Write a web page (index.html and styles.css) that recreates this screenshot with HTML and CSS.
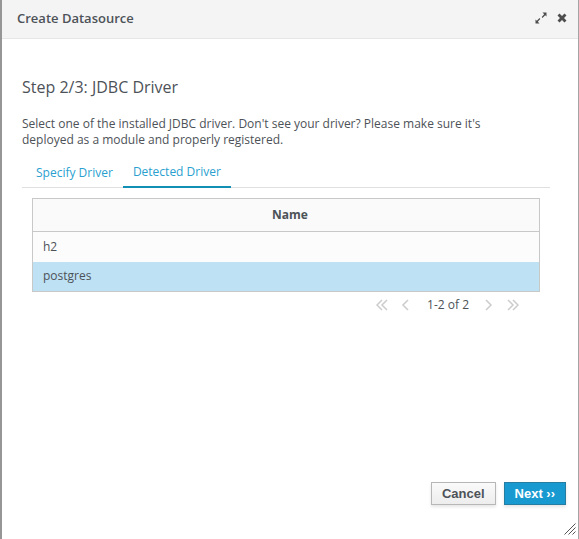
FILE: index.html
```html
<!DOCTYPE html>
<html lang="en">
<head>
<meta charset="utf-8">
<title>Create Datasource</title>
<link rel="stylesheet" href="styles.css">
</head>
<body>
<div class="dialog" role="dialog" aria-labelledby="dialog-title">
  <header class="dialog-header">
    <h1 class="dialog-title" id="dialog-title">Create Datasource</h1>
    <button class="icon-button" type="button" aria-label="Maximize">
      <svg width="12" height="12" viewBox="0 0 12 12"><path d="M7.500 .5h4v4L10.200 3.200 7.500 5.900 6.700 5.100 9.200 2.200zM4.500 11.500h-4v-4L1.800 8.800 4.500 6.100 5.300 6.900 2.800 9.800z"/></svg>
    </button>
    <button class="icon-button" type="button" aria-label="Close">
      <svg width="10" height="10" viewBox="0 0 10 10"><path d="M2.500 .5 5 3 7.500 .5 9.500 2.500 7 5 9.500 7.500 7.500 9.500 5 7 2.500 9.500 .5 7.500 3 5 .5 2.500z"/></svg>
    </button>
  </header>
  <main class="dialog-body">
    <h2 class="step-title">Step 2/3: JDBC Driver</h2>
    <p class="intro">Select one of the installed JDBC driver. Don't see your driver? Please make sure it's deployed as a module and properly registered.</p>
    <nav class="tabs">
      <a class="tab" href="#specify">Specify Driver</a>
      <a class="tab tab-active" href="#detected">Detected Driver</a>
    </nav>
    <section class="panel" id="detected">
      <table class="drivers">
        <thead><tr><th scope="col">Name</th></tr></thead>
        <tbody>
          <tr><td>h2</td></tr>
          <tr class="selected"><td>postgres</td></tr>
        </tbody>
      </table>
      <div class="pager">
        <button class="pager-button" type="button" aria-label="First page"><svg width="12" height="12" viewBox="0 0 12 12"><path d="M6 1 1 6l5 5M11 1 6 6l5 5"/></svg></button>
        <button class="pager-button" type="button" aria-label="Previous page"><svg width="12" height="12" viewBox="0 0 12 12"><path d="M8 1 3 6l5 5"/></svg></button>
        <span class="pager-label">1-2 of 2</span>
        <button class="pager-button" type="button" aria-label="Next page"><svg width="12" height="12" viewBox="0 0 12 12"><path d="m3 1 5 5-5 5"/></svg></button>
        <button class="pager-button" type="button" aria-label="Last page"><svg width="12" height="12" viewBox="0 0 12 12"><path d="m1 1 5 5-5 5M6 1l5 5-5 5"/></svg></button>
      </div>
    </section>
  </main>
  <footer class="dialog-footer">
    <button class="button" type="button">Cancel</button>
    <button class="button button-primary" type="button">Next ››</button>
  </footer>
  <svg class="resize-grip" width="12" height="12" viewBox="0 0 12 12"><path d="M.5 11.500 11.500 .5M4.500 11.500 11.500 4.500M8.500 11.500 11.500 8.500"/></svg>
</div>
</body>
</html>
```
FILE: styles.css
```css
* {
  box-sizing: border-box;
}

body {
  margin: 0;
  font-family: "Open Sans", sans-serif;
  font-size: 12px;
  line-height: 16px;
  color: #4d5258;
}

button {
  font: inherit;
  color: inherit;
}

.dialog {
  position: relative;
  display: flex;
  flex-direction: column;
  min-height: 100vh;
  border-left: 2px solid #969696;
  border-right: 1px solid #a4a4a4;
  background: #fff;
}

.dialog-header {
  display: flex;
  align-items: center;
  gap: 10px;
  padding: 9px 11px 11px 15px;
  border-bottom: 1px solid #e6e6e6;
  background: #f4f4f4;
}

.dialog-title {
  flex: 1;
  margin: 0;
  font-size: 13px;
  line-height: 18px;
  font-weight: 600;
}

.icon-button {
  display: flex;
  padding: 0;
  border: 0;
  background: none;
}

.icon-button svg {
  fill: #4d4d4d;
}

.dialog-body {
  flex: 1;
  padding: 36px 28px 0 20px;
}

.step-title {
  margin: 0 0 17px;
  font-size: 16px;
  line-height: 24px;
  font-weight: 400;
}

.intro {
  margin: 0;
  max-width: 480px;
}

.tabs {
  display: flex;
  align-items: flex-end;
  margin-top: 8px;
  border-bottom: 1px solid #e0e0e0;
}

.tab {
  padding: 8px 10px 6px;
  color: #2a9fd0;
  text-decoration: none;
}

.tab:first-child {
  margin-left: 4px;
}

.tab-active {
  margin-bottom: -1px;
  border-bottom: 2px solid #128fb5;
}

.panel {
  padding: 10px;
}

.drivers {
  width: 100%;
  border: 1px solid #c8c8c8;
  border-collapse: collapse;
}

.drivers th {
  height: 33px;
  padding: 0 10px 0 18px;
  border-bottom: 1px solid #c8c8c8;
  background: #fafafa;
  font-weight: 700;
}

.drivers td {
  height: 30px;
  padding: 0 10px;
  background: #fcfcfc;
}

.drivers .selected td {
  background: #bee1f4;
}

.pager {
  display: flex;
  align-items: center;
  justify-content: flex-end;
  gap: 12px;
  padding: 5px 21px 0 0;
}

.pager-button {
  display: flex;
  padding: 0;
  border: 0;
  background: none;
}

.pager-button svg {
  fill: none;
  stroke: #ccc;
  stroke-width: 1.500;
}

.pager-label {
  padding: 0 2px 0 3px;
}

.dialog-footer {
  display: flex;
  justify-content: flex-end;
  gap: 8px;
  padding: 0 12px 34px;
}

.button {
  padding: 3px 10px;
  border: 1px solid #b7b7b7;
  background: linear-gradient(#fafafa, #ededed);
  box-shadow: 0 2px 3px rgba(0, 0, 0, 0.1);
  font-family: "Liberation Sans", sans-serif;
  font-size: 13px;
  line-height: 15px;
  font-weight: 700;
}

.button-primary {
  border-color: #267da1;
  background: #189ad1;
  color: #fff;
}

.resize-grip {
  position: absolute;
  right: 2px;
  bottom: 4px;
  fill: none;
  stroke: #555;
}
```
